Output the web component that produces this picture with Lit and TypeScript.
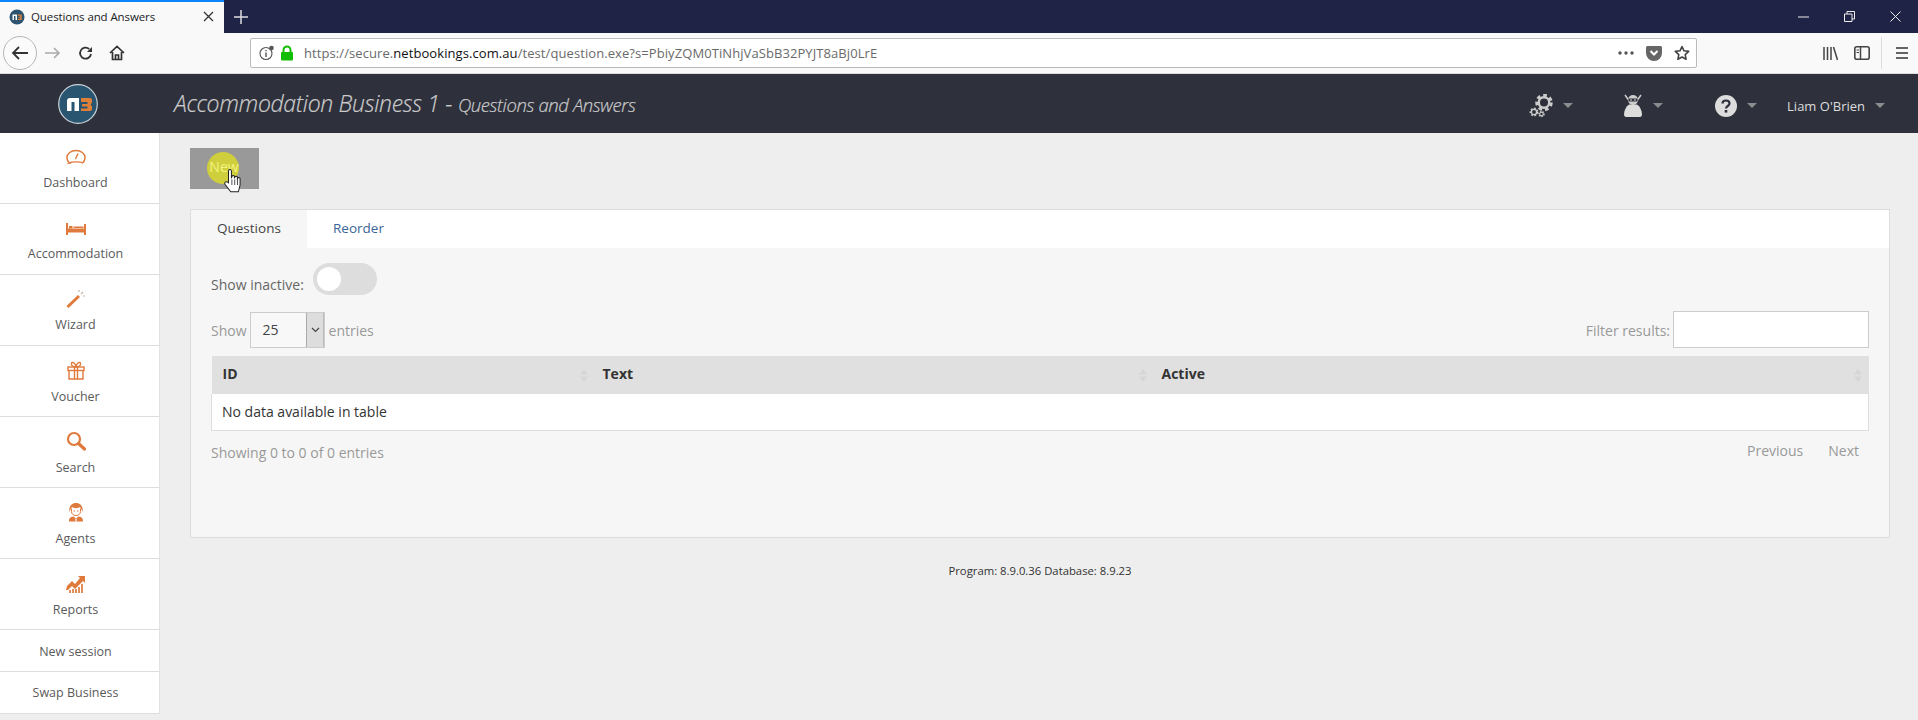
import { LitElement, html, css, svg } from "lit";
import { customElement } from "lit/decorators.js";

const O = "#df7a3c";
const navIcons: Record<string, unknown> = {
  Dashboard: svg`<path d="M3.500 16C1.300 14.500 1 12 1 10.500 1 6.500 5 3.500 10 3.500s9 3 9 7c0 1.500-.3 4-2.500 5.500-2-1.500-11-1.500-13.500 0z" fill="none" stroke="${O}" stroke-width="1.400"/><path d="M9.500 12L12 6.500" fill="none" stroke="${O}" stroke-width="1.400"/>`,
  Accommodation: svg`<path d="M1 5v12M19 6v11" stroke="${O}" stroke-width="2"/><rect x="1" y="10.500" width="18" height="4" fill="${O}"/><rect x="3" y="8" width="3.500" height="2.500" fill="${O}"/><rect x="7.500" y="8.500" width="10" height="1.500" fill="${O}"/>`,
  Wizard: svg`<path d="M1.500 18L13 7" stroke="${O}" stroke-width="3"/><path d="M15 5l2-2M17 7h2M13 3V1" stroke="#c9b6a8" stroke-width="1.200"/>`,
  Voucher: svg`<g fill="none" stroke="${O}" stroke-width="1.400"><rect x="2" y="7" width="16" height="3.500"/><path d="M3 10.500V19h14v-8.500M8.500 7v12M11.500 7v12"/><path d="M10 7C7 7 5 5.500 5.500 3.500S9 2 10 7c1-5 4-5.500 4.500-3.500S13 7 10 7z"/></g>`,
  Search: svg`<circle cx="8" cy="8" r="6" fill="none" stroke="${O}" stroke-width="2.200"/><path d="M12.500 12.500l6 5.500" stroke="${O}" stroke-width="3.200" stroke-linecap="round"/>`,
  Agents: svg`<path d="M3.500 10C2.500 4 6 1 10 1s7.500 3 6.500 9c-.8-1.500-1-3.500-2.500-5-2 1.500-6 1.500-8 0-1.500 1.500-1.700 3.500-2.500 5z" fill="${O}"/><path d="M5.500 6.500v3c0 2.500 2 4 4.500 4s4.500-1.500 4.500-4v-3" fill="none" stroke="${O}" stroke-width="1"/><path d="M7.500 9h1.500M11 9h1.500" stroke="${O}"/><path d="M3 19.500c0-3.500 1-4.500 4.500-5l2.500 2 2.500-2c3.500.5 4.500 1.500 4.500 5z" fill="${O}"/><path d="M10 16.500v3" stroke="#fff" stroke-width="1.200"/>`,
  Reports: svg`<path d="M1 13l5-5 3 3 5-6-2-2h7v7l-2-2-8 8-3-3-4 4H0z" fill="${O}"/><path d="M4 17v3M7 16v4M10 16v4M13 14v6M16 11v9" stroke="${O}" stroke-width="1.700"/>`,
};

const gear = (cx: number, cy: number, r: number, sw: number, dash: string) => svg`
  <circle cx=${cx} cy=${cy} r=${r} fill="none" stroke="#ccc" stroke-width=${sw} stroke-dasharray=${dash}/>
  <circle cx=${cx} cy=${cy} r=${r - sw / 2} fill="none" stroke="#ccc" stroke-width=${sw * 0.7}/>`;

@customElement("browser-bar")
class BrowserBar extends LitElement {
  static styles = css`
    :host { display: block; font-family: "Open Sans", sans-serif; }
    .tabs { height: 33px; background: #1f2345; display: flex; align-items: stretch; color: #fff; }
    .tab { width: 224px; box-sizing: border-box; background: #f9f9fa; border-top: 2px solid #0a84ff; display: flex; align-items: center; padding: 0 10px 2px 9px; gap: 6px; color: #222; font-size: 11.500px; }
    .tab span { flex: 1; white-space: nowrap; letter-spacing: -.1px; }
    .plus { width: 34px; display: flex; align-items: center; justify-content: center; }
    .spacer { flex: 1; }
    .win { width: 46px; display: flex; align-items: center; justify-content: center; }
    .tools { height: 41px; box-sizing: border-box; background: #f9f9fa; border-bottom: 1px solid #ddd; display: flex; align-items: center; }
    .back { width: 34px; height: 34px; box-sizing: border-box; border: 1px solid #b5b5b5; border-radius: 50%; margin-left: 3px; display: flex; align-items: center; justify-content: center; background: #fbfbfb; }
    .btn { display: flex; }
    .url { width: 1447px; height: 30px; box-sizing: border-box; background: #fff; border: 1px solid #bbb; border-radius: 2px; display: flex; align-items: center; font-size: 13px; color: #6a6a6a; padding: 0 6px 0 8px; }
    .url b { font-weight: 400; color: #111; }
    .addr { flex: 1; margin-left: 10px; white-space: nowrap; letter-spacing: .08px; }
    .sep { width: 1px; height: 32px; background: #ddd; }
  `;
  render() {
    return html`
      <div class="tabs">
        <div class="tab">
          <svg width="16" height="16" viewBox="0 0 16 16"><circle cx="8" cy="8" r="7.500" fill="#2c5370"/><path d="M3.500 11V5.500h4.500V11H6.500V7H5v4z" fill="#fff"/><path d="M8.700 5.500h4V11h-4V9.800h2.500V8.800H9.500V7.700h1.700V6.700H8.700z" fill="#e08038"/></svg>
          <span>Questions and Answers</span>
          <svg width="11" height="11" viewBox="0 0 11 11"><path d="M1 1l9 9M10 1l-9 9" stroke="#333" stroke-width="1.300"/></svg>
        </div>
        <div class="plus"><svg width="14" height="14" viewBox="0 0 14 14"><path d="M7 0v14M0 7h14" stroke="#ddd" stroke-width="1.500"/></svg></div>
        <div class="spacer"></div>
        <div class="win"><svg width="11" height="2" viewBox="0 0 11 2"><path d="M0 1h11" stroke="#eee"/></svg></div>
        <div class="win"><svg width="11" height="11" viewBox="0 0 11 11"><path d="M.5 3h7.500v7.500H.5zM3 3V.5h7.500V8H8" fill="none" stroke="#eee"/></svg></div>
        <div class="win"><svg width="11" height="11" viewBox="0 0 11 11"><path d="M.5.500l10 10M10.500.500l-10 10" stroke="#eee"/></svg></div>
      </div>
      <div class="tools">
        <div class="back"><svg width="18" height="16" viewBox="0 0 18 16"><path d="M17 8H2M8 2L2 8l6 6" fill="none" stroke="#333" stroke-width="1.800"/></svg></div>
        <div class="btn" style="margin-left:8px"><svg width="16" height="14" viewBox="0 0 16 14"><path d="M0 7h14M9 2l5 5-5 5" fill="none" stroke="#aaa" stroke-width="1.600"/></svg></div>
        <div class="btn" style="margin-left:17px"><svg width="15" height="15" viewBox="0 0 15 15"><path d="M13 8a5.500 5.500 0 1 1-1.800-5" fill="none" stroke="#333" stroke-width="1.800"/><path d="M14 1v5H9z" fill="#333"/></svg></div>
        <div class="btn" style="margin-left:16px"><svg width="16" height="16" viewBox="0 0 16 16"><path d="M1 8l7-6.500L15 8M3.500 7v7.500h9V7M6.500 14.500V10h3v4.500" fill="none" stroke="#333" stroke-width="1.700"/></svg></div>
        <div style="width:125px"></div>
        <div class="url">
          <svg width="16" height="16" viewBox="0 0 16 16"><circle cx="7" cy="8.500" r="6" fill="none" stroke="#555" stroke-width="1.100"/><path d="M7 7.500v4.500M7 5v1.300" stroke="#555" stroke-width="1.400"/><circle cx="12.500" cy="3" r="2.300" fill="#555"/></svg>
          <svg style="margin-left:5px" width="14" height="16" viewBox="0 0 14 16"><path d="M3.500 7V5a3.500 3.500 0 0 1 7 0v2" fill="none" stroke="#12bc00" stroke-width="2"/><rect x="1" y="7" width="12" height="8.500" rx="1" fill="#12bc00"/></svg>
          <span class="addr">https://secure.<b>netbookings.com.au</b>/test/question.exe?s=PbiyZQM0TiNhjVaSbB32PYJT8aBj0LrE</span>
          <svg width="16" height="4" viewBox="0 0 16 4"><circle cx="2" cy="2" r="1.700" fill="#555"/><circle cx="8" cy="2" r="1.700" fill="#555"/><circle cx="14" cy="2" r="1.700" fill="#555"/></svg>
          <svg style="margin-left:12px" width="16" height="15" viewBox="0 0 16 15"><path d="M1.500 0h13A1.500 1.500 0 0 1 16 1.500V7a8 8 0 0 1-16 0V1.500A1.500 1.500 0 0 1 1.500 0z" fill="#666"/><path d="M4.500 5L8 8.500 11.500 5" fill="none" stroke="#fff" stroke-width="2"/></svg>
          <svg style="margin-left:12px" width="16" height="16" viewBox="0 0 16 16"><path d="M8 1.500l2 4.300 4.700.6-3.500 3.200.9 4.700L8 12l-4.100 2.300.9-4.700L1.300 6.400 6 5.800z" fill="none" stroke="#444" stroke-width="1.600" stroke-linejoin="round"/></svg>
        </div>
        <div style="width:126px"></div>
        <div class="btn"><svg width="15" height="15" viewBox="0 0 15 15"><path d="M1 1v13M4.500 1v13M8 1v13M10.500 1l4 13" fill="none" stroke="#444" stroke-width="1.500"/></svg></div>
        <div class="btn" style="margin-left:16px"><svg width="16" height="14" viewBox="0 0 16 14"><rect x=".8" y=".8" width="14.400" height="12.400" rx="2" fill="none" stroke="#444" stroke-width="1.600"/><path d="M6.500 1v12" stroke="#444" stroke-width="1.500"/><path d="M2.500 4h2.500M2.500 6.500h2.500" stroke="#444"/></svg></div>
        <div class="sep" style="margin-left:11px"></div>
        <div class="btn" style="margin-left:14px"><svg width="12" height="12" viewBox="0 0 12 12"><path d="M0 1h12M0 6h12M0 11h12" stroke="#333" stroke-width="1.600"/></svg></div>
      </div>
    `;
  }
}

@customElement("site-header")
class SiteHeader extends LitElement {
  static styles = css`
    :host { display: flex; height: 59px; background: #2e303b; align-items: center; font-family: "Open Sans", sans-serif; color: #ccc; }
    .logo { margin-left: 58px; display: flex; position: relative; top: 0; }
    .title { margin-left: 76px; font-style: italic; font-weight: 300; font-size: 23px; letter-spacing: -.32px; white-space: nowrap; position: relative; top: -1px; -webkit-text-stroke: .2px #ccc; }
    .title small { font-size: 18.500px; letter-spacing: -.38px; font-weight: 300; }
    .spacer { flex: 1; }
    .item { display: flex; align-items: center; padding-top: 4px; }
    .caret { width: 0; height: 0; border-left: 5px solid transparent; border-right: 5px solid transparent; border-top: 5px solid #8a8a8f; margin-left: 10px; }
    .user { font-size: 13px; color: #ddd; white-space: nowrap; }
  `;
  render() {
    return html`
      <div class="logo"><svg width="40" height="40" viewBox="0 0 40 40"><circle cx="20" cy="20" r="19.300" fill="#2a5571" stroke="#c9d3d9" stroke-width="1.200"/><path d="M9 27V17a3 3 0 0 1 3-3h9v13h-4.500V18H13.500v9z" fill="#fff"/><path d="M23 14h9a2 2 0 0 1 2 2v2.500L32.500 20.500l1.500 2V25a2 2 0 0 1-2 2h-9v-2.500h6.500v-2H24v-2.500h5.500v-2H23z" fill="#e08038"/></svg></div>
      <div class="title">Accommodation Business 1 - <small>Questions and Answers</small></div>
      <div class="spacer"></div>
      <div class="item" style="margin-right:50px">
        <svg width="24" height="24" viewBox="0 0 24 24">${gear(15, 8.500, 7, 3.500, "3.500 2.900")}${gear(5, 18, 3.500, 1.800, "1.800 1.400")}${gear(12.500, 20, 2.500, 1.500, "1.400 1.100")}</svg>
        <span class="caret"></span>
      </div>
      <div class="item" style="margin-right:52px">
        <svg width="20" height="24" viewBox="0 0 20 24"><path d="M2 1l5 7M18 1l-5 7" stroke="#ccc" stroke-width="1.500"/><circle cx="10" cy="6" r="5" fill="#ccc"/><path d="M5.500 4.500h9v3h-9z" fill="#2e303b"/><circle cx="8" cy="6" r=".8" fill="#eee"/><circle cx="12" cy="6" r=".8" fill="#eee"/><path d="M6 10.500h8c3 2 5 6 5 10 0 1.500-1 2.500-2 2.500H3c-1 0-2-1-2-2.500 0-4 2-8 5-10z" fill="#ddd"/></svg>
        <span class="caret"></span>
      </div>
      <div class="item" style="margin-right:30px">
        <svg width="22" height="22" viewBox="0 0 22 22"><circle cx="11" cy="11" r="11" fill="#ddd"/><path d="M7.500 8.500C7.500 6.500 9 5.500 11 5.500s3.500 1 3.500 3c0 2.500-3.500 2.500-3.500 5" fill="none" stroke="#2e303b" stroke-width="2.200"/><rect x="9.700" y="15" width="2.600" height="2.600" fill="#2e303b"/></svg>
        <span class="caret"></span>
      </div>
      <div class="item" style="margin-right:33px">
        <span class="user">Liam O'Brien</span>
        <span class="caret"></span>
      </div>
    `;
  }
}

@customElement("side-nav")
class SideNav extends LitElement {
  static styles = css`
    :host { display: block; width: 160px; flex: none; font-family: "Open Sans", sans-serif; color: #5a5a5a; }
    .item { box-sizing: border-box; background: #fff; border-bottom: 1px solid #ddd; border-right: 1px solid #e2e2e2; display: flex; flex-direction: column; align-items: center; font-size: 12.500px; height: 71px; padding: 14px 8px 0 0; }
    .item svg { display: block; }
    .label { margin-top: 6px; line-height: 20px; white-space: nowrap; }
    .item:nth-child(n+4) .label { margin-top: 7px; }
    .plain { height: 42px; padding-top: 0; justify-content: center; }
    .session { padding-top: 2px; }
  `;
  render() {
    return html`
      ${Object.entries(navIcons).map(([k, v]) => html`
        <div class="item"><svg width="20" height="20" viewBox="0 0 20 20">${v}</svg><span class="label">${k}</span></div>`)}
      <div class="item plain session">New session</div>
      <div class="item plain">Swap Business</div>
    `;
  }
}

@customElement("app-root")
class AppRoot extends LitElement {
  static styles = css`
    :host { display: block; width: 1918px; height: 720px; overflow: hidden; background: #eee; font-family: "Open Sans", sans-serif; font-size: 14px; color: #333; }
    .page { display: flex; }
    .main { flex: 1; padding: 15px 29px 0 30px; }
    .new { position: relative; width: 69px; height: 41px; background: #999; color: #fff; display: flex; align-items: center; justify-content: center; font-size: 14px; margin-bottom: 20px; }
    .new span { position: relative; color: #f4f47e; left: -.5px; top: -2px; }
    .ripple { position: absolute; left: 17px; top: 4px; width: 32px; height: 32px; border-radius: 50%; background: #cfcf3d; }
    .cursor { position: absolute; left: 34px; top: 20px; }
    .card { height: 329px; box-sizing: border-box; border: 1px solid #ddd; background: #f6f6f6; }
    .tabs { display: flex; height: 38px; background: #fff; }
    .tab { display: flex; align-items: center; padding: 0 26px 2px; width: 116px; box-sizing: border-box; font-size: 13.500px; color: #444; }
    .tab.on { background: #f6f6f6; }
    .tab.link { color: #3b6596; }
    .body { padding: 15px 20px 0; }
    .row { display: flex; align-items: center; }
    .lbl { color: #666; }
    .muted { color: #999; }
    .sw-row { height: 32px; gap: 9px; }
    .sw-row .lbl { position: relative; top: 5px; }
    .toggle { width: 64px; height: 32px; border-radius: 16px; background: #ddd; display: flex; align-items: center; padding-left: 4px; box-sizing: border-box; }
    .knob { width: 24px; height: 24px; border-radius: 50%; background: #fff; }
    .len { margin-top: 17px; height: 36px; }
    .sel { display: flex; width: 75px; height: 36px; box-sizing: border-box; border: 1px solid #ccc; background: #f8f8f8; margin: 0 4px 0 3px; }
    .sel span { flex: 1; padding-left: 12px; line-height: 34px; color: #444; }
    .arr { width: 17px; background: #ddd; border-left: 1px solid #aaa; box-shadow: inset -1px 0 0 #bbb; display: flex; align-items: center; justify-content: center; }
    .grow { flex: 1; }
    .filter { width: 196px; height: 37px; box-sizing: border-box; border: 1px solid #ccc; background: #fff; margin-left: 3px; align-self: flex-start; margin-top: -1px; }
    table { margin-top: 8px; width: 1658px; border-collapse: collapse; table-layout: fixed; }
    th { height: 38px; padding: 0 0 3px 11px; box-sizing: border-box; background: #e0e0e0; text-align: left; font-weight: 700; font-size: 14px; color: #333; position: relative; }
    th svg { position: absolute; right: 4px; top: 13px; }
    th:last-child svg { right: 7px; }
    td { height: 36px; box-sizing: border-box; padding: 0 0 0 10px; background: #fff; border: 1px solid #ddd; border-top: none; color: #333; font-size: 14px; }
    .foot { margin-top: 10px; display: flex; justify-content: space-between; }
    .foot .info { position: relative; top: 2px; }
    .pager { display: flex; gap: 25px; padding-right: 10px; }
    .version { text-align: center; font-size: 11.300px; color: #333; margin-top: 25px; }
  `;
  render() {
    const sort = html`<svg width="8" height="13" viewBox="0 0 8 13"><path d="M4 0l4 5.500H0zM4 13l4-5.500H0z" fill="#d6d6d6"/></svg>`;
    return html`
      <browser-bar></browser-bar>
      <site-header></site-header>
      <div class="page">
        <side-nav></side-nav>
        <div class="main">
          <div class="new">
            <div class="ripple"></div>
            <span>New</span>
            <svg class="cursor" width="18" height="25" viewBox="0 0 16 22"><path d="M4 11V2.500a1.300 1.300 0 0 1 2.600 0V9l.4-1.500a1.200 1.200 0 0 1 2.300 0V9l.3-1a1.200 1.200 0 0 1 2.300 0v1.500l.3-.5a1.100 1.100 0 0 1 2.100.3V15l-1.500 6H6L1 14.500c-1-2 1-3.500 3-1.500z" fill="#fff" stroke="#222" stroke-width=".9"/><path d="M7 10v5M9.500 10v5M12 10v5" stroke="#222" stroke-width=".7"/></svg>
          </div>
          <div class="card">
            <div class="tabs"><div class="tab on">Questions</div><div class="tab link">Reorder</div></div>
            <div class="body">
              <div class="row sw-row"><span class="lbl">Show inactive:</span><div class="toggle"><div class="knob"></div></div></div>
              <div class="row len">
                <span class="muted">Show</span>
                <div class="sel"><span>25</span><div class="arr"><svg width="9" height="6" viewBox="0 0 9 6"><path d="M1 1l3.500 3.500L8 1" fill="none" stroke="#444" stroke-width="1.200"/></svg></div></div>
                <span class="muted">entries</span>
                <div class="grow"></div>
                <span class="muted">Filter results:</span>
                <div class="filter"></div>
              </div>
              <table>
                <colgroup><col style="width:380px"/><col style="width:559px"/><col/></colgroup>
                <thead><tr><th>ID${sort}</th><th>Text${sort}</th><th>Active${sort}</th></tr></thead>
                <tbody><tr><td colspan="3">No data available in table</td></tr></tbody>
              </table>
              <div class="foot muted">
                <span class="info">Showing 0 to 0 of 0 entries</span>
                <div class="pager"><span>Previous</span><span>Next</span></div>
              </div>
            </div>
          </div>
          <div class="version">Program: 8.9.0.36 Database: 8.9.23</div>
        </div>
      </div>
    `;
  }
}
